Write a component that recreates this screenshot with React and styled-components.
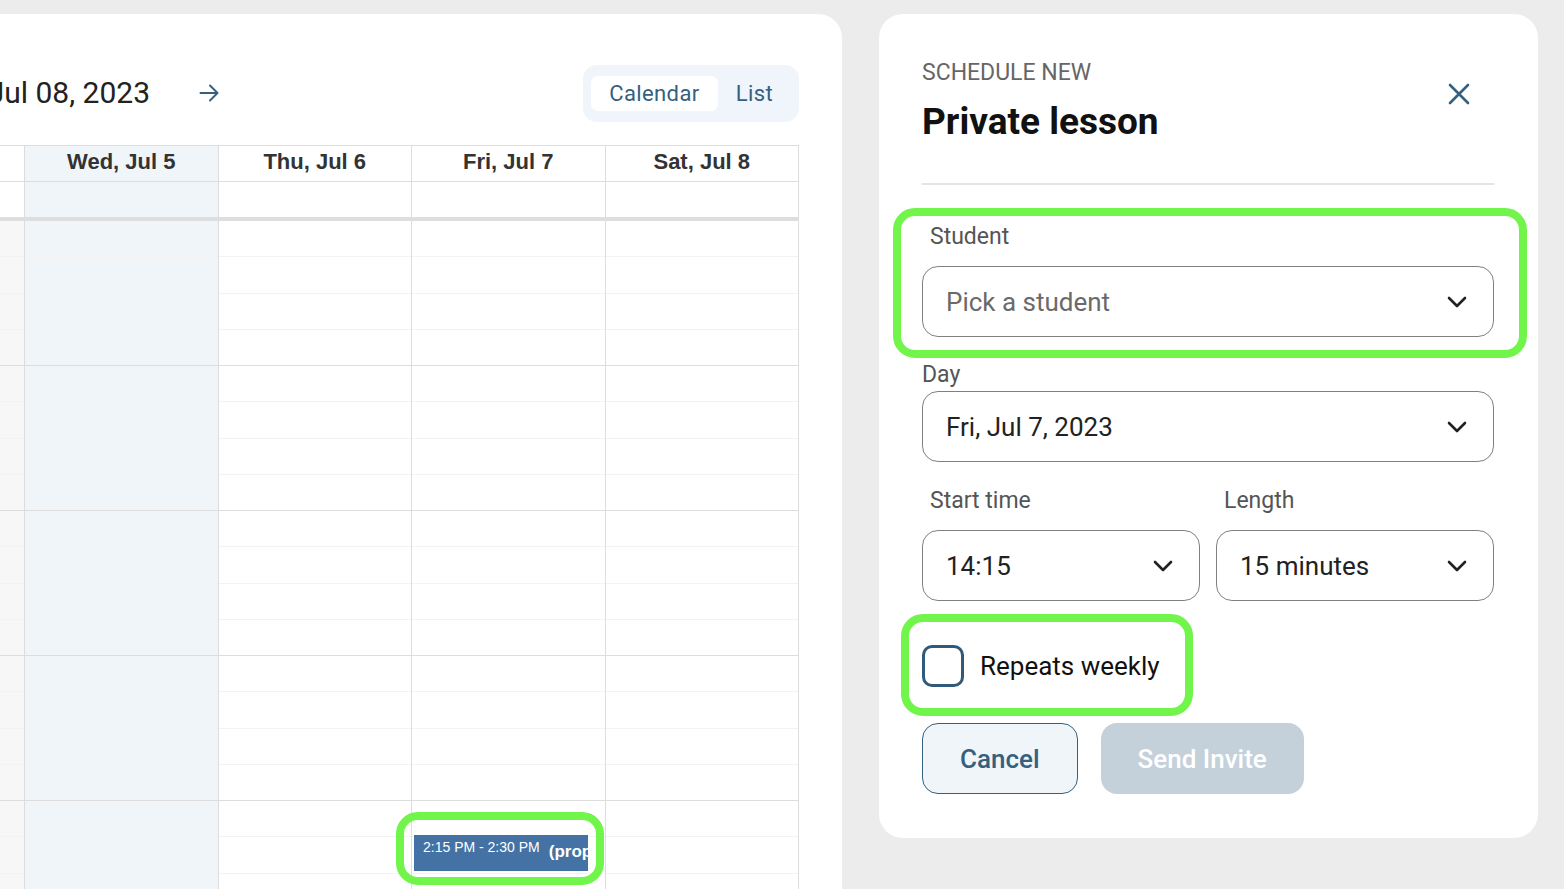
import React from 'react'
import styled, { createGlobalStyle } from 'styled-components'

const GlobalStyle = createGlobalStyle`
  html, body {
    margin: 0;
    padding: 0;
    height: 100%;
    overflow: hidden;
    background: #ececec;
  }
  body {
    font-family: Roboto, "Liberation Sans", Arial, sans-serif;
  }
  * { box-sizing: border-box; }
`

const days = [
  { label: 'Wed, Jul 5', today: true },
  { label: 'Thu, Jul 6' },
  { label: 'Fri, Jul 7', event: true },
  { label: 'Sat, Jul 8' },
]

const HOURS = 5

const ArrowRight = () => (
  <svg width="20" height="20" viewBox="0 0 20 20" fill="none" stroke="currentColor" strokeWidth="2" strokeLinecap="round" strokeLinejoin="round">
    <path d="M1.5 10H18.5M11 2.5L18.5 10L11 17.5" />
  </svg>
)

const CloseIcon = () => (
  <svg width="22" height="22" viewBox="0 0 22 22" fill="none" stroke="currentColor" strokeWidth="2.6" strokeLinecap="round">
    <path d="M2 2L20 20M20 2L2 20" />
  </svg>
)

const Chevron = () => (
  <svg width="20" height="12" viewBox="0 0 20 12" fill="none" stroke="currentColor" strokeWidth="2.6" strokeLinecap="round" strokeLinejoin="round">
    <path d="M2 2L10 10L18 2" />
  </svg>
)

const Select = ({ value, placeholder }) => (
  <SelectBox $placeholder={placeholder}>
    <span>{value}</span>
    <Chevron />
  </SelectBox>
)

const App = () => {
  return (
    <>
      <GlobalStyle />
      <Page>
        <CalendarCard>
          <Toolbar>
            <NavGroup>
              <RangeTitle>
                <span>Jul 02, 2023 - Jul 08, 2023</span>
              </RangeTitle>
              <NextButton aria-label="Next week">
                <ArrowRight />
              </NextButton>
            </NavGroup>
            <ViewToggle>
              <ToggleButton $active>Calendar</ToggleButton>
              <ToggleButton>List</ToggleButton>
            </ViewToggle>
          </Toolbar>

          <HeaderRow>
            <HeaderCell />
            {days.map(d => (
              <HeaderCell key={d.label} $today={d.today}>{d.label}</HeaderCell>
            ))}
          </HeaderRow>
          <GridRow>
            <AllDayCell />
            {days.map(d => (
              <AllDayCell key={d.label} $today={d.today} />
            ))}
          </GridRow>
          <Divider />
          <GridRow>
            <BodyColumn $gutter>
              {Array.from({ length: HOURS * 4 }).map((_, i) => (
                <Slot key={i} $hourEnd={i % 4 === 3} />
              ))}
            </BodyColumn>
            {days.map(d => (
              <BodyColumn key={d.label} $today={d.today}>
                {Array.from({ length: HOURS * 4 }).map((_, i) => (
                  <Slot key={i} $hourEnd={i % 4 === 3} />
                ))}
                {d.event && (
                  <>
                    <EventBlock>
                      <EventTime>2:15 PM - 2:30 PM</EventTime>
                      <EventTitle>(proposed)</EventTitle>
                    </EventBlock>
                    <EventHighlight />
                  </>
                )}
              </BodyColumn>
            ))}
          </GridRow>
        </CalendarCard>

        <FormCard>
          <FormHeader>
            <div>
              <Eyebrow>Schedule new</Eyebrow>
              <FormTitle>Private lesson</FormTitle>
            </div>
            <CloseButton aria-label="Close">
              <CloseIcon />
            </CloseButton>
          </FormHeader>
          <Rule />

          <Highlight $margin="23px -33px 0 -29px" $padding="8px 25px 13px 21px">
            <Label $inset $gap="16px">Student</Label>
            <Select value="Pick a student" placeholder />
          </Highlight>

          <Label $top="4px" $gap="3px">Day</Label>
          <Select value="Fri, Jul 7, 2023" />

          <TwoCols>
            <div>
              <Label $inset $gap="16px">Start time</Label>
              <Select value="14:15" />
            </div>
            <div>
              <Label $inset $gap="16px">Length</Label>
              <Select value="15 minutes" />
            </div>
          </TwoCols>

          <Highlight $margin="13px 0 0 -21px" $padding="23px 25px 21px 13px" $fit>
            <CheckRow>
              <CheckBox />
              <span>Repeats weekly</span>
            </CheckRow>
          </Highlight>

          <Actions>
            <SecondaryButton>Cancel</SecondaryButton>
            <PrimaryButton disabled>Send Invite</PrimaryButton>
          </Actions>
        </FormCard>
      </Page>
    </>
  )
}

export default App

const Page = styled.div`
  display: flex;
  align-items: flex-start;
  gap: 37px;
  padding-top: 14px;
  height: 889px;
`

const CalendarCard = styled.div`
  flex: 0 0 842px;
  height: 900px;
  background: #ffffff;
  border-top-right-radius: 24px;
  padding: 51px 43px 0 0;
  overflow: hidden;
`

const Toolbar = styled.div`
  display: flex;
  align-items: center;
  justify-content: space-between;
  height: 56px;
  margin-bottom: 24px;
`

const NavGroup = styled.div`
  display: flex;
  align-items: center;
`

const RangeTitle = styled.div`
  width: 150px;
  display: flex;
  justify-content: flex-end;
  overflow: hidden;
  white-space: nowrap;
  font-size: 30px;
  color: #222;
  line-height: 40px;
`

const NextButton = styled.button`
  margin-left: 49px;
  display: flex;
  padding: 0;
  border: 0;
  background: none;
  color: #35607f;
`

const ViewToggle = styled.div`
  display: flex;
  padding: 11px 8px;
  background: #eff5fa;
  border-radius: 14px;
`

const ToggleButton = styled.button`
  height: 35px;
  padding: 0 18px;
  border: 0;
  border-radius: 7px;
  background: ${p => (p.$active ? '#ffffff' : 'transparent')};
  color: #35607f;
  font-family: Roboto, "Liberation Sans", sans-serif;
  font-size: 22px;
  letter-spacing: 0.4px;
`

const GridRow = styled.div`
  display: grid;
  grid-template-columns: 25px repeat(4, 1fr);
`

const HeaderRow = styled(GridRow)`
  border-top: 1px solid #dddddd;
`

const HeaderCell = styled.div`
  height: 36px;
  display: flex;
  align-items: center;
  justify-content: center;
  padding-bottom: 4px;
  border-right: 1px solid #dddddd;
  border-bottom: 1px solid #dddddd;
  background: ${p => (p.$today ? '#f0f5fa' : '#ffffff')};
  font-family: "Liberation Sans", Arial, sans-serif;
  font-weight: 700;
  font-size: 22px;
  color: #333;
`

const AllDayCell = styled.div`
  height: 35px;
  border-right: 1px solid #dddddd;
  background: ${p => (p.$today ? '#f0f5fa' : '#ffffff')};
`

const Divider = styled.div`
  height: 4px;
  background: #dedede;
`

const BodyColumn = styled.div`
  position: relative;
  border-right: 1px solid #dddddd;
  background: ${p => (p.$today ? '#f0f5fa' : p.$gutter ? '#f7f7f7' : '#ffffff')};
`

const Slot = styled.div`
  height: 36.25px;
  border-bottom: 1px solid ${p => (p.$hourEnd ? '#dddddd' : '#f3f3f3')};
`

const EventBlock = styled.div`
  position: absolute;
  top: 614px;
  left: 2px;
  width: 174px;
  height: 36px;
  display: flex;
  align-items: flex-start;
  gap: 9px;
  padding: 4px 0 0 9px;
  overflow: hidden;
  white-space: nowrap;
  background: #4472a5;
  color: #ffffff;
  font-family: "Liberation Sans", Arial, sans-serif;
`

const EventTime = styled.span`
  font-size: 14px;
  line-height: 16px;
`

const EventTitle = styled.span`
  margin-top: 3px;
  font-size: 17px;
  font-weight: 700;
  line-height: 20px;
`

const EventHighlight = styled.div`
  position: absolute;
  top: 591px;
  left: -16px;
  width: 208px;
  height: 73px;
  border: 8px solid #72f54a;
  border-radius: 22px;
  pointer-events: none;
`

const FormCard = styled.div`
  flex: 0 0 659px;
  height: 824px;
  display: flex;
  flex-direction: column;
  background: #ffffff;
  border-radius: 24px;
  padding: 45px 44px 0 43px;
`

const FormHeader = styled.div`
  display: flex;
  justify-content: space-between;
  align-items: flex-start;
`

const Eyebrow = styled.div`
  font-size: 23px;
  line-height: 28px;
  color: #666;
  text-transform: uppercase;
`

const FormTitle = styled.h1`
  margin: 13px 0 0;
  font-size: 37px;
  line-height: 44px;
  font-weight: 700;
  color: #111;
`

const CloseButton = styled.button`
  display: flex;
  margin: 24px 24px 0 0;
  padding: 0;
  border: 0;
  background: none;
  color: #35607f;
`

const Rule = styled.div`
  height: 2px;
  margin-top: 39px;
  background: #e4e4e4;
`

const Highlight = styled.div`
  align-self: ${p => (p.$fit ? 'flex-start' : 'stretch')};
  margin: ${p => p.$margin};
  padding: ${p => p.$padding};
  border: 8px solid #72f54a;
  border-radius: 22px;
`

const Label = styled.div`
  margin-top: ${p => p.$top || 0};
  margin-bottom: ${p => p.$gap || 0};
  padding-left: ${p => (p.$inset ? '8px' : 0)};
  font-size: 23px;
  line-height: 26px;
  color: #555;
`

const SelectBox = styled.div`
  display: flex;
  align-items: center;
  justify-content: space-between;
  height: 71px;
  padding: 0 26px 0 23px;
  border: 1px solid #808080;
  border-radius: 16px;
  font-size: 26px;
  color: ${p => (p.$placeholder ? '#6a6a6a' : '#222')};
  svg { color: #222; flex: none; }
`

const TwoCols = styled.div`
  display: grid;
  grid-template-columns: 1fr 1fr;
  gap: 16px;
  margin-top: 26px;
`

const CheckRow = styled.label`
  display: flex;
  align-items: center;
  gap: 16px;
  font-size: 26px;
  color: #111;
`

const CheckBox = styled.span`
  width: 42px;
  height: 42px;
  border: 3px solid #30597a;
  border-radius: 10px;
  flex: none;
`

const Actions = styled.div`
  display: flex;
  gap: 23px;
  margin-top: 7px;
`

const BaseButton = styled.button`
  height: 71px;
  padding: 0 37px;
  border-radius: 16px;
  font-family: Roboto, "Liberation Sans", sans-serif;
  font-size: 26px;
  font-weight: 500;
`

const SecondaryButton = styled(BaseButton)`
  border: 1px solid #35607f;
  background: #f0f5fa;
  color: #35607f;
`

const PrimaryButton = styled(BaseButton)`
  border: 0;
  background: #c4d1db;
  color: #ffffff;
`
